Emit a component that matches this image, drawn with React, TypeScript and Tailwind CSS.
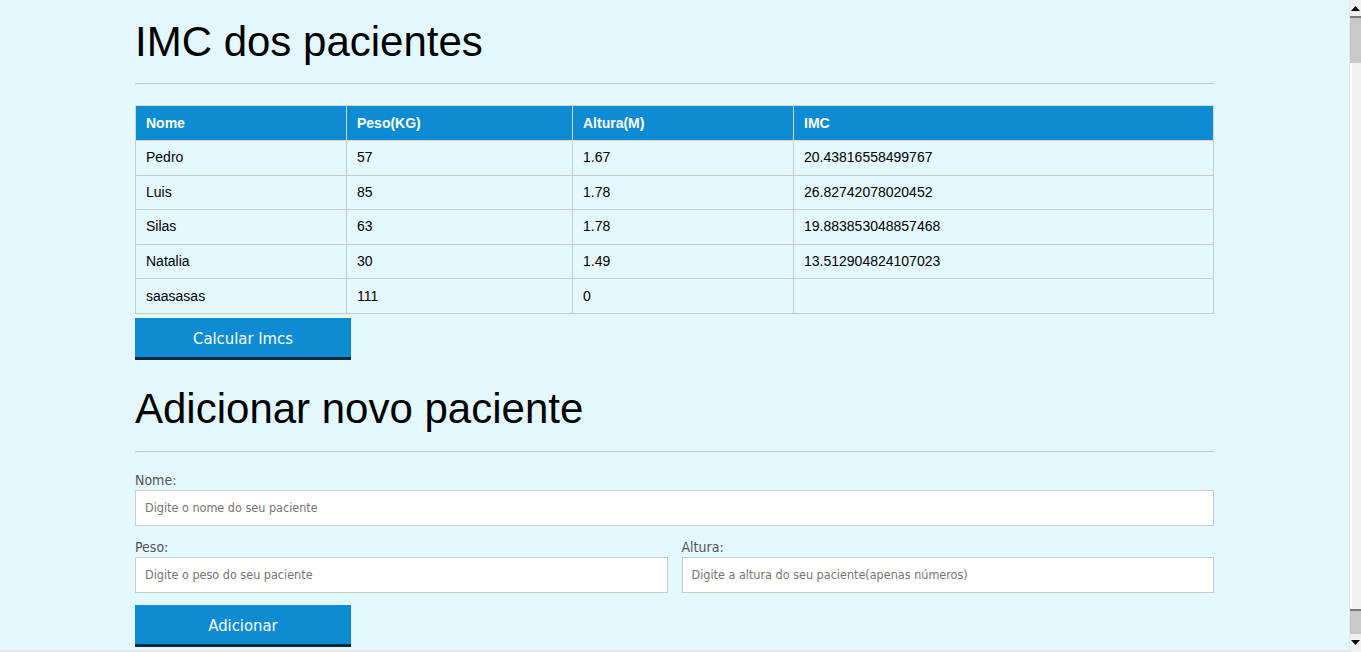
import React from "react";

const rows = [
  ["Pedro", "57", "1.67", "20.43816558499767"],
  ["Luis", "85", "1.78", "26.82742078020452"],
  ["Silas", "63", "1.78", "19.883853048857468"],
  ["Natalia", "30", "1.49", "13.512904824107023"],
  ["saasasas", "111", "0", ""],
];

const condensed = { fontFamily: '"DejaVu Sans Condensed", "DejaVu Sans", sans-serif' };

function FakeScrollbar() {
  return (
    <div aria-hidden className="fixed right-0 top-0 flex h-[652px] w-[12px] flex-col border-l border-[#e8e8e8] bg-[#f0f0f0]">
      <div className="flex h-[16px] items-center justify-end bg-[#f0f0f0] pr-px">
        <svg width="9" height="5" viewBox="0 0 9 5"><path d="M0 5 L4.5 0 L9 5 Z" fill="#000" /></svg>
      </div>
      <div className="h-[47px] border-t-2 border-[#7a7a7a] bg-[#c8c8c8]" />
      <div className="flex-1 border-l-2 border-white" />
      <div className="h-[25px] border-t-2 border-[#7a7a7a] bg-[#c8c8c8]" />
      <div className="flex h-[16px] items-center justify-end pr-px">
        <svg width="9" height="5" viewBox="0 0 9 5"><path d="M0 0 L4.5 5 L9 0 Z" fill="#000" /></svg>
      </div>
      <div className="h-[2px]" />
    </div>
  );
}

export default function App() {
  return (
    <div className="min-h-screen bg-[#e4f8ff] text-black" style={{ fontFamily: '"Liberation Sans", Arial, sans-serif' }}>
      <div className="ml-[135px] w-[1079px] pb-[60px]">
        <h1 className="pt-[18px] text-[42px] leading-[47px] font-normal">IMC dos pacientes</h1>
        <hr className="mt-[18px] border-0 border-t border-[#cccccc]" />
        <table className="mt-[21px] w-full border-collapse text-[14px]">
          <thead>
            <tr className="h-[35px] bg-[#0d8cd3] text-white">
              <th className="w-[211px] border border-[#d6d6d6] pl-[10px] text-left font-bold">Nome</th>
              <th className="w-[226px] border border-[#d6d6d6] pl-[10px] text-left font-bold">Peso(KG)</th>
              <th className="w-[221px] border border-[#d6d6d6] pl-[10px] text-left font-bold">Altura(M)</th>
              <th className="border border-[#d6d6d6] pl-[10px] text-left font-bold">IMC</th>
            </tr>
          </thead>
          <tbody>
            {rows.map((r, i) => (
              <tr key={i} className="h-[34.6px]">
                {r.map((c, j) => (
                  <td key={j} className="border border-[#cacaca] pl-[10px]">
                    {c}
                  </td>
                ))}
              </tr>
            ))}
          </tbody>
        </table>
        <button
          className="mt-[4px] block h-[42px] w-[216px] border-b-[3px] border-[#0b2b3d] bg-[#0d8cd3] pt-[3px] text-[16.5px] text-white"
          style={condensed}
        >
          Calcular Imcs
        </button>
        <h2 className="pt-[25px] text-[42px] leading-[47px] font-normal">Adicionar novo paciente</h2>
        <hr className="mt-[19px] border-0 border-t border-[#cccccc]" />
        <form className="mt-[20px] flex flex-col" style={condensed}>
          <label className="text-[14px] leading-[17px] text-[#555555]">Nome:</label>
          <input
            className="mt-px h-[36px] border border-[#cccccc] bg-white px-[9px] text-[12.5px] placeholder:text-[#757575] outline-none"
            placeholder="Digite o nome do seu paciente"
          />
          <div className="mt-[13px] grid grid-cols-2 gap-[14px]">
            <div className="flex flex-col">
              <label className="text-[14px] leading-[17px] text-[#555555]">Peso:</label>
              <input
                className="mt-px h-[36px] border border-[#cccccc] bg-white px-[9px] text-[12.5px] placeholder:text-[#757575] outline-none"
                placeholder="Digite o peso do seu paciente"
              />
            </div>
            <div className="flex flex-col">
              <label className="text-[14px] leading-[17px] text-[#555555]">Altura:</label>
              <input
                className="mt-px h-[36px] border border-[#cccccc] bg-white px-[9px] text-[12.5px] placeholder:text-[#757575] outline-none"
                placeholder="Digite a altura do seu paciente(apenas números)"
              />
            </div>
          </div>
          <button
            type="button"
            className="mt-[12px] h-[42px] w-[216px] border-b-[3px] border-[#0b2b3d] bg-[#0d8cd3] pt-[3px] text-[16.5px] text-white"
          >
            Adicionar
          </button>
        </form>
      </div>
      <div aria-hidden className="fixed bottom-0 left-0 h-[2px] w-full bg-[#e6e6e6]" />
      <FakeScrollbar />
    </div>
  );
}
